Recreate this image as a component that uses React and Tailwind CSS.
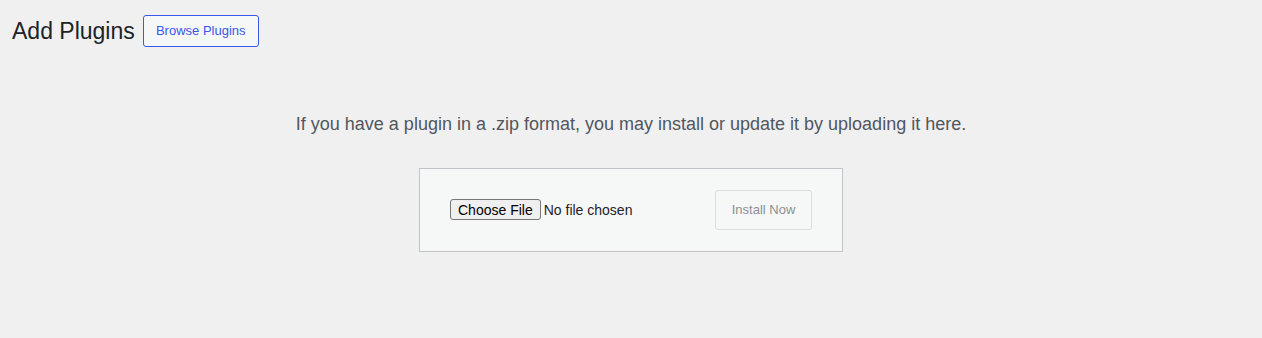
export default function App() {
  return (
    <div className="min-h-[338px] bg-[#f0f0f1] font-['Liberation_Sans',Arial,sans-serif] text-[#3c434a]">
      <div className="px-[12px] pt-[15px]">
        <div className="flex items-center gap-[8px] h-[32px]">
          <h1 className="text-[23px] leading-[1.3] font-normal text-[#1d2327] translate-y-[1px]">Add Plugins</h1>
          <button className="h-[32px] w-[116px] border border-[#3858e9] rounded-[3px] text-[13px] text-[#3858e9] bg-[#f6f7f7]">
            Browse Plugins
          </button>
        </div>
      </div>

      <div className="flex flex-col items-center">
        <p className="mt-[64px] text-[18px] leading-[27px] text-[#50575e] text-center">
          If you have a plugin in a .zip format, you may install or update it by uploading it here.
        </p>
        <form className="mt-[30px] w-[424px] h-[84px] border border-[#c3c4c7] bg-[#f6f7f7] flex items-center justify-between px-[30px]">
          <input
            type="file"
            className="text-[14px] text-[#1d2327] file:mr-[3px] file:text-[14px] file:px-[7px] file:py-0 file:h-[21px] file:border file:border-[#767676] file:rounded-[3px] file:bg-[#efefef] file:text-black file:font-['Liberation_Sans',Arial,sans-serif] w-[230px]"
          />
          <button
            type="button"
            disabled
            className="h-[40px] w-[97px] border border-[#dcdcde] rounded-[3px] bg-[#f6f7f7] text-[13px] text-[#8c8f94]"
          >
            Install Now
          </button>
        </form>
      </div>
    </div>
  );
}
